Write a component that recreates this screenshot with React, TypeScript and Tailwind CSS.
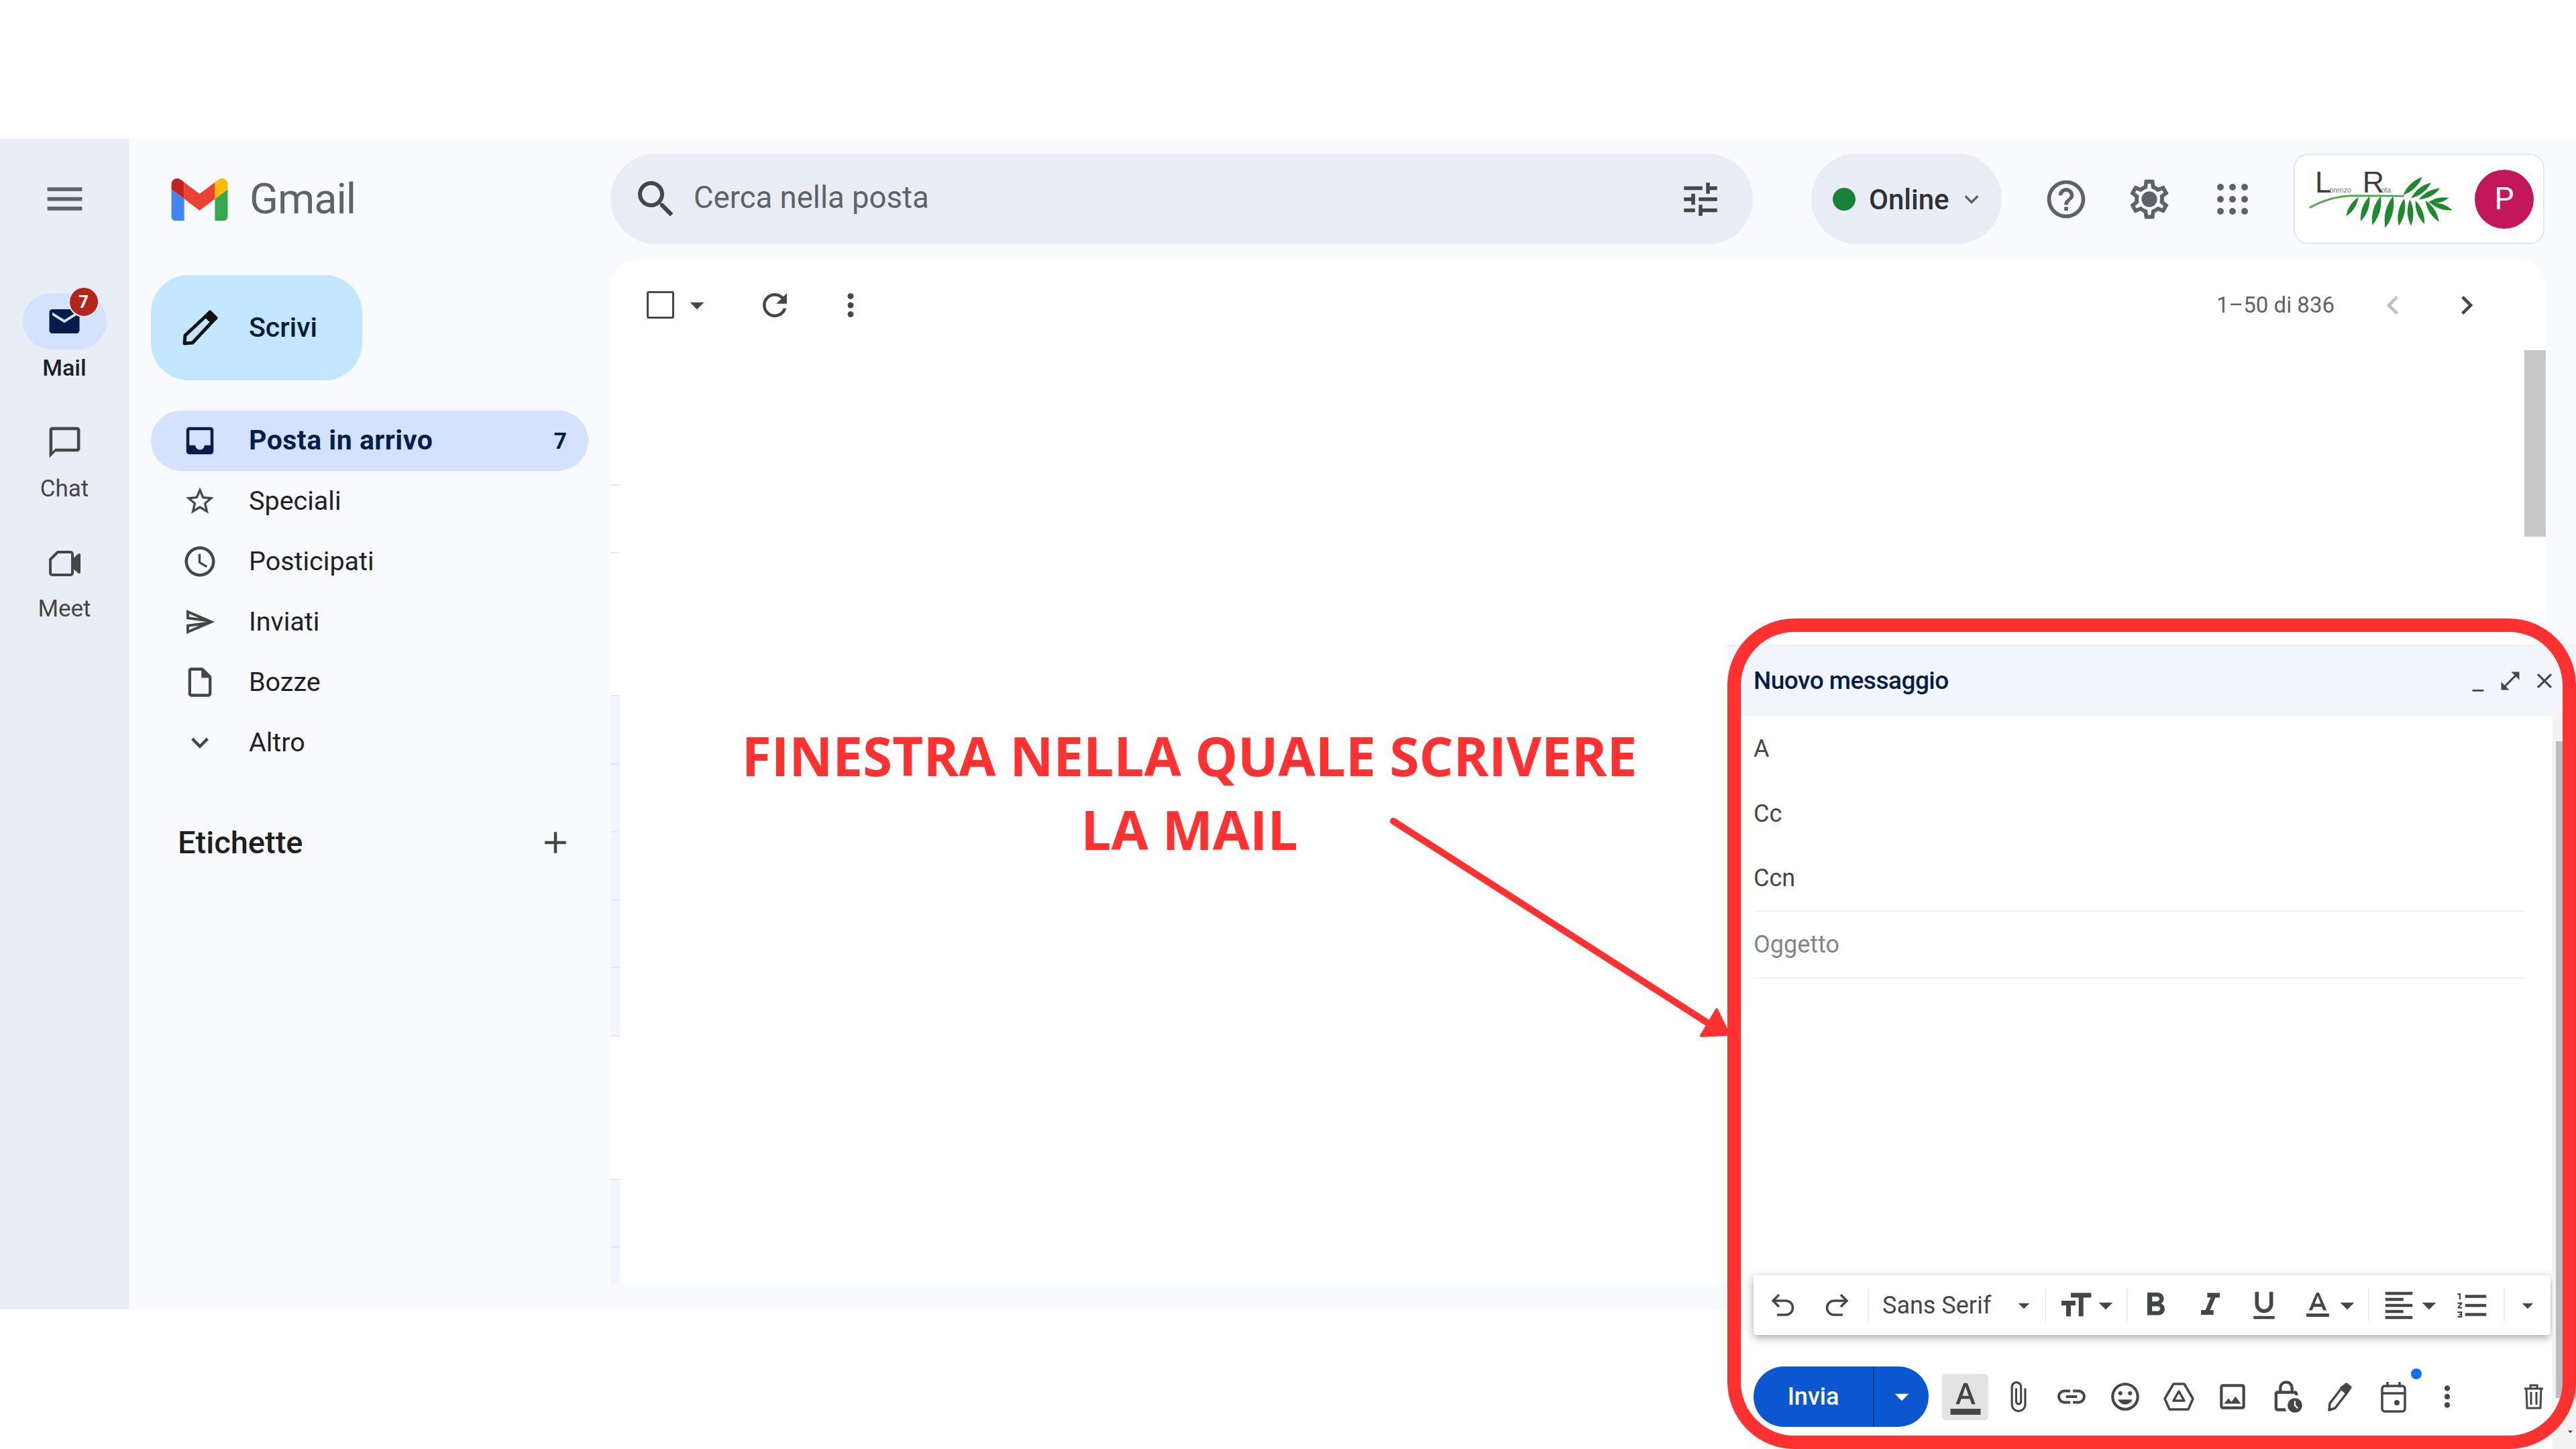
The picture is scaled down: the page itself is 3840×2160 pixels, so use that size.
import React from 'react';
import {
  MdMenu, MdEmail, MdOutlineChatBubbleOutline, MdInbox, MdStarBorder, MdAccessTime,
  MdOutlineSend, MdOutlineInsertDriveFile, MdExpandMore, MdAdd, MdSearch, MdTune, MdHelpOutline, MdOutlineSettings,
  MdRefresh, MdMoreVert, MdArrowDropDown, MdChevronLeft, MdChevronRight, MdMinimize, MdOpenInFull, MdClose,
  MdFormatSize, MdFormatBold, MdFormatItalic, MdFormatUnderlined, MdTextFormat, MdFormatAlignLeft, MdFormatListNumbered,
  MdFormatColorText, MdAttachFile, MdLink, MdInsertEmoticon, MdOutlineImage, MdOutlineLockClock,
} from 'react-icons/md';

const navItems = [
  { label: 'Speciali', icon: <MdStarBorder size={50} /> },
  { label: 'Posticipati', icon: <MdAccessTime size={54} /> },
  { label: 'Inviati', icon: <MdOutlineSend size={48} /> },
  { label: 'Bozze', icon: <MdOutlineInsertDriveFile size={52} /> },
  { label: 'Altro', icon: <MdExpandMore size={52} /> },
];

const stripRows = [
  { h: 'h-[335px]', cls: '' },
  { h: 'h-[101px]', cls: 'border-t-2 border-[#e8eaef]' },
  { h: 'h-[213px]', cls: 'border-t-2 border-[#e8eaef]' },
  { h: 'h-[102px]', cls: 'bg-[#f2f6fc] border-t-2 border-[#e5e8ee]' },
  { h: 'h-[101px]', cls: 'bg-[#f2f6fc] border-t-2 border-[#e5e8ee]' },
  { h: 'h-[102px]', cls: 'bg-[#f2f6fc] border-t-2 border-[#e5e8ee]' },
  { h: 'h-[100px]', cls: 'bg-[#f2f6fc] border-t-2 border-[#e5e8ee]' },
  { h: 'h-[102px]', cls: 'bg-[#f2f6fc] border-t-2 border-[#e5e8ee]' },
  { h: 'h-[214px]', cls: 'border-t-2 border-[#e5e8ee]' },
  { h: 'h-[101px]', cls: 'bg-[#f2f6fc] border-t-2 border-[#e5e8ee]' },
  { h: 'h-[57px]', cls: 'bg-[#f2f6fc] border-t-2 border-[#e5e8ee]' },
];

const leaves = [
  [290, 210, 235, 295], [340, 205, 300, 318], [390, 205, 352, 335], [445, 205, 410, 348], [495, 215, 470, 338],
  [520, 220, 525, 338], [545, 225, 585, 330], [590, 225, 650, 320], [610, 235, 710, 268], [600, 235, 695, 213],
  [560, 220, 655, 170], [525, 215, 615, 145], [490, 200, 575, 120],
];

function GmailLogo() {
  return (
    <svg width="85" height="63" viewBox="52 42 88 66">
      <path fill="#4285f4" d="M58 108h14V74L52 59v43c0 3.32 2.69 6 6 6" />
      <path fill="#34a853" d="M120 108h14c3.32 0 6-2.69 6-6V59l-20 15" />
      <path fill="#fbbc04" d="M120 48v26l20-15v-8c0-7.42-8.47-11.65-14.4-7.2" />
      <path fill="#ea4335" d="M72 74V48l24 18 24-18v26L96 92" />
      <path fill="#c5221f" d="M52 51v8l20 15V48l-5.6-4.2c-5.94-4.45-14.4-.22-14.4 7.2" />
    </svg>
  );
}

function PalmLogo() {
  return (
    <svg width="250" height="135" viewBox="30 15 750 405" className="shrink-0">
      <text x="96" y="190" fontFamily="Liberation Sans" fontSize="134" fill="#3c3c3c">L</text>
      <text x="160" y="188" fontFamily="Liberation Sans" fontSize="32" fill="#777">orenzo</text>
      <text x="308" y="190" fontFamily="Liberation Sans" fontSize="134" fill="#3c3c3c">R</text>
      <text x="392" y="188" fontFamily="Liberation Sans" fontSize="32" fill="#777">ota</text>
      <path d="M75 255 C130 225 190 205 260 203 L490 205" fill="none" stroke="#5aa755" strokeWidth="9" strokeLinecap="round" />
      {leaves.map(([x1, y1, x2, y2], i) => {
        const mx = (x1 + x2) / 2;
        const my = (y1 + y2) / 2;
        const nx = (y2 - y1) * 0.22;
        const ny = (x1 - x2) * 0.22;
        return (
          <path key={i} fill="#1f8a2c" d={`M${x1} ${y1} Q${mx + nx} ${my + ny} ${x2} ${y2} Q${mx - nx} ${my - ny} ${x1} ${y1}Z`} />
        );
      })}
    </svg>
  );
}

function AppsIcon() {
  return (
    <svg width="46" height="46" viewBox="0 0 46 46" fill="#5f6368">
      {[5, 23, 41].map((cy) =>
        [5, 23, 41].map((cx) => <circle key={`${cx}-${cy}`} cx={cx} cy={cy} r="5" />)
      )}
    </svg>
  );
}

function ComposePencil() {
  return (
    <svg width="54" height="54" viewBox="0 0 54 54" fill="none" stroke="#111" strokeWidth="5" strokeLinejoin="round">
      <path d="M4 50l1-12L36 9l9 9-29 31z" />
      <path d="M36 9l6-6 9 9-6 6z" fill="#111" />
    </svg>
  );
}

function MeetIcon() {
  return (
    <svg width="48" height="40" viewBox="0 0 48 40" fill="none" stroke="#444746" strokeWidth="4" strokeLinejoin="round">
      <path d="M14 3h19a3 3 0 0 1 3 3v28a3 3 0 0 1-3 3H6a3 3 0 0 1-3-3V14z" />
      <path d="M36 16l10-9v26l-10-9z" fill="#444746" />
    </svg>
  );
}

function HistoryIcon({ flip }: { flip?: boolean }) {
  return (
    <svg width="36" height="36" viewBox="0 0 36 36" fill="none" stroke="#444746" strokeWidth="3.5" className={flip ? '-scale-x-100' : ''}>
      <path d="M12 2L3 11l9 9" />
      <path d="M3 11h19a10 10 0 0 1 0 21H9" />
    </svg>
  );
}

function DriveIcon() {
  return (
    <svg width="46" height="42" viewBox="0 0 46 42" fill="none" stroke="#444746" strokeWidth="3.5" strokeLinejoin="round">
      <path d="M15 2h16l13 22-7 16H9L2 24z" />
      <path d="M23 13l8 14H15z" />
    </svg>
  );
}

function PenIcon() {
  return (
    <svg width="40" height="44" viewBox="0 0 40 44" fill="none" stroke="#444746" strokeWidth="3.5" strokeLinejoin="round">
      <path d="M4 42l1-10L22 10l8 7-17 22z" />
      <path d="M22 9l8-6 6 5-6 9z" fill="#444746" />
    </svg>
  );
}

function CalendarIcon() {
  return (
    <svg width="38" height="48" viewBox="0 0 38 48" fill="none" stroke="#444746" strokeWidth="3.5">
      <rect x="2" y="8" width="34" height="38" rx="4" />
      <path d="M2 19h34M10 2v8M28 2v8" />
      <circle cx="24" cy="33" r="4" fill="#444746" stroke="none" />
    </svg>
  );
}

function TrashIcon() {
  return (
    <svg width="30" height="38" viewBox="0 0 30 38" fill="none" stroke="#444746" strokeWidth="3">
      <path d="M1 7h28M10 7V2h10v5M4 7l1 29h20l1-29M11 12v19M19 12v19" />
    </svg>
  );
}

function ToolSep({ className }: { className: string }) {
  return <div className={`w-[2px] h-[49px] bg-[#eceef1] shrink-0 ${className}`} />;
}

function Tool({ className, children }: { className: string; children: React.ReactNode }) {
  return <div className={`flex items-center justify-center shrink-0 ${className}`}>{children}</div>;
}

function ComposeWindow() {
  return (
    <div className="absolute left-[2575px] top-[961px] w-[1265px] h-[1199px] bg-white flex flex-col border-t-2 border-[#ededed] font-['Roboto',sans-serif]">
      <div className="h-[104px] shrink-0 bg-[#f2f6fc] flex items-center pl-[39px] pr-[28px]">
        <span className="text-[37px] font-medium tracking-[-0.5px] text-[#041e49]">Nuovo messaggio</span>
        <div className="ml-auto flex items-center text-[#444746]">
          <MdMinimize size={34} className="mr-[13px] translate-y-[3px]" />
          <MdOpenInFull size={36} className="mr-[14px]" />
          <MdClose size={38} />
        </div>
      </div>
      <div className="flex flex-1 min-h-0">
        <div className="w-[1230px] pl-[39px] flex flex-col text-[36px] text-[#444746]">
          <div className="h-[98px] flex items-center">A</div>
          <div className="h-[96px] flex items-center">Cc</div>
          <div className="h-[98px] flex items-center w-[1151px] border-b-2 border-[#eef0f2]">Ccn</div>
          <div className="h-[100px] flex items-center w-[1151px] border-b-2 border-[#eef0f2] text-[#80868b]">Oggetto</div>
          <div className="flex-1" />
          <div className="h-[89px] w-[1188px] bg-white rounded-[4px] shadow-[0_4px_14px_rgba(0,0,0,0.35)] flex items-center pl-[4px] text-[#444746]">
            <Tool className="w-[80px]"><HistoryIcon /></Tool>
            <Tool className="w-[80px]"><HistoryIcon flip /></Tool>
            <ToolSep className="ml-[6px]" />
            <span className="ml-[20px] w-[191px] shrink-0 text-[36px]">Sans Serif</span>
            <Tool className="w-[40px]"><MdArrowDropDown size={50} /></Tool>
            <ToolSep className="ml-[11px]" />
            <Tool className="ml-[16px] w-[56px]"><MdFormatSize size={56} /></Tool>
            <Tool className="w-[34px]"><MdArrowDropDown size={50} className="shrink-0" /></Tool>
            <ToolSep className="ml-[14px]" />
            <Tool className="w-[82px]"><MdFormatBold size={58} /></Tool>
            <Tool className="w-[82px]"><MdFormatItalic size={56} /></Tool>
            <Tool className="w-[78px]"><MdFormatUnderlined size={54} /></Tool>
            <Tool className="ml-[9px] w-[64px]"><MdTextFormat size={58} /></Tool>
            <Tool className="w-[24px]"><MdArrowDropDown size={50} className="shrink-0" /></Tool>
            <ToolSep className="ml-[19px]" />
            <Tool className="ml-[12px] w-[64px]"><MdFormatAlignLeft size={54} /></Tool>
            <Tool className="w-[26px]"><MdArrowDropDown size={50} className="shrink-0" /></Tool>
            <Tool className="ml-[20px] w-[64px]"><MdFormatListNumbered size={54} /></Tool>
            <ToolSep className="ml-[14px]" />
            <Tool className="ml-[14px] w-[40px]"><MdArrowDropDown size={50} /></Tool>
          </div>
          <div className="mt-[47px] h-[90px] flex items-center mb-[33px] text-[#444746]">
            <div className="flex h-[90px] w-[261px] shrink-0 rounded-full overflow-hidden bg-[#0b57d0] text-white">
              <div className="w-[180px] flex items-center justify-center border-r-2 border-[#123a7c] text-[36px] font-medium">Invia</div>
              <div className="flex-1 flex items-center justify-center"><MdArrowDropDown size={50} /></div>
            </div>
            <div className="ml-[20px] w-[69px] h-[69px] shrink-0 rounded-[6px] bg-[#e3e3e3] flex items-center justify-center"><MdFormatColorText size={54} /></div>
            <Tool className="ml-[4px] w-[80px]"><MdAttachFile size={50} /></Tool>
            <Tool className="w-[80px]"><MdLink size={50} /></Tool>
            <Tool className="w-[80px]"><MdInsertEmoticon size={50} /></Tool>
            <Tool className="w-[80px]"><DriveIcon /></Tool>
            <Tool className="w-[80px]"><MdOutlineImage size={50} /></Tool>
            <Tool className="w-[80px]"><MdOutlineLockClock size={52} /></Tool>
            <Tool className="w-[80px]"><PenIcon /></Tool>
            <Tool className="w-[80px] relative">
              <CalendarIcon />
              <span className="absolute right-[-2px] top-[-18px] w-[16px] h-[16px] rounded-full bg-[#0b6ff0]" />
            </Tool>
            <Tool className="w-[80px]"><MdMoreVert size={50} /></Tool>
            <Tool className="ml-[49px] w-[80px]"><TrashIcon /></Tool>
          </div>
        </div>
        <div className="w-[35px] bg-[#f3f3f3] flex flex-col">
          <div className="h-[38px]" />
          <div className="ml-[5px] h-[979px] bg-[#bdbdbd]" />
          <div className="flex-1 flex items-end justify-center text-[#444746]"><MdArrowDropDown size={44} className="ml-[18px] mb-[4px]" /></div>
        </div>
      </div>
    </div>
  );
}

export default function App() {
  return (
    <div className="relative w-[3840px] h-[2160px] bg-white overflow-hidden font-['Roboto',sans-serif] pt-[207px]">
      <div className="flex h-[1745px] bg-[#f8fafd]">
        {/* rail */}
        <div className="w-[192px] shrink-0 bg-[#e9eef6] flex flex-col items-center pt-[55px] text-[#444746]">
          <MdMenu size={69} className="text-[#5f6368]" />
          <div className="relative mt-[106px] w-[125px] h-[84px] rounded-full bg-[#d3e3fd] flex items-center justify-center">
            <MdEmail size={54} className="text-[#041e49]" />
            <span className="absolute left-[68px] top-[-10px] w-[46px] h-[46px] rounded-full bg-[#b3261e] border-2 border-[#e9eef6] text-white text-[26px] font-bold flex items-center justify-center">7</span>
          </div>
          <span className="mt-[7px] h-[40px] leading-[40px] text-[34px] font-medium text-[#202124]">Mail</span>
          <MdOutlineChatBubbleOutline size={55} className="mt-[64px]" />
          <span className="mt-[22px] h-[40px] leading-[40px] text-[35px]">Chat</span>
          <div className="mt-[61px] h-[60px] flex items-center"><MeetIcon /></div>
          <span className="mt-[18px] h-[40px] leading-[40px] text-[35px]">Meet</span>
        </div>

        {/* sidebar */}
        <div className="w-[718px] shrink-0 pl-[33px]">
          <div className="h-[180px] flex items-center pl-[30px]">
            <GmailLogo />
            <span className="ml-[32px] text-[63px] tracking-[-1px] text-[#5f6368]">Gmail</span>
          </div>
          <div className="mt-[23px] w-[315px] h-[157px] rounded-[56px] bg-[#c2e7ff] flex items-center">
            <div className="w-[146px] flex justify-center"><ComposePencil /></div>
            <span className="text-[41px] font-medium text-[#001d35]">Scrivi</span>
          </div>
          <div className="mt-[45px] w-[652px] text-[39.5px] text-[#202124]">
            <div className="h-[90px] rounded-full bg-[#d3e3fd] flex items-center pr-[32px] font-bold text-[#041e49]">
              <div className="w-[146px] flex justify-center"><MdInbox size={54} /></div>
              <span className="text-[41px] tracking-[0.5px]">Posta in arrivo</span>
              <span className="ml-auto text-[34px]">7</span>
            </div>
            {navItems.map((item) => (
              <div key={item.label} className="h-[90px] flex items-center">
                <div className="w-[146px] flex justify-center text-[#444746]">{item.icon}</div>
                <span>{item.label}</span>
              </div>
            ))}
          </div>
          <div className="mt-[74px] w-[652px] pl-[40px] pr-[22px] h-[60px] flex items-center justify-between text-[#1f1f1f]">
            <span className="text-[47px] font-medium">Etichette</span>
            <MdAdd size={54} className="text-[#444746]" />
          </div>
        </div>

        {/* main */}
        <div className="w-[2885px] shrink-0">
          <div className="h-[180px] flex pt-[22px]">
            <div className="w-[1703px] h-[135px] rounded-full bg-[#e9eef6] flex items-center pl-[32px] pr-[45px] text-[#444746]">
              <MdSearch size={72} />
              <span className="ml-[20px] pb-[2px] text-[45.5px] text-[#5f6368]">Cerca nella posta</span>
              <MdTune size={66} className="ml-auto" />
            </div>
            <div className="ml-[87px] w-[284px] h-[135px] rounded-full bg-[#e9eef6] flex items-center pl-[32px] text-[#303134]">
              <span className="w-[34px] h-[34px] rounded-full bg-[#188038]" />
              <span className="ml-[20px] pt-[2px] text-[42px] font-medium">Online</span>
              <MdExpandMore size={42} className="ml-[12px] text-[#5f6368]" />
            </div>
            <div className="ml-[56px] w-[80px] h-[135px] flex items-center justify-center text-[#5f6368]"><MdHelpOutline size={68} /></div>
            <div className="relative ml-[44px] w-[80px] h-[135px] flex items-center justify-center text-[#5f6368]">
              <MdOutlineSettings size={70} />
              <span className="absolute left-[29px] top-[57px] w-[22px] h-[22px] rounded-full bg-[#5f6368]" />
            </div>
            <div className="ml-[44px] w-[80px] h-[135px] flex items-center justify-center"><AppsIcon /></div>
            <div className="ml-[51px] w-[374px] h-[135px] rounded-[22px] bg-white border-2 border-[#e3e5e9] flex items-center pl-[8px] pr-[14px]">
              <PalmLogo />
              <span className="ml-auto w-[88px] h-[88px] rounded-full bg-[#c2185b] text-white text-[46px] flex items-center justify-center">P</span>
            </div>
          </div>
          <div className="h-[1528px] rounded-t-[40px] bg-white flex overflow-hidden">
            <div className="w-[14px] shrink-0 flex flex-col">
              {stripRows.map((row, i) => (
                <div key={i} className={`${row.h} ${row.cls}`} />
              ))}
            </div>
            <div className="flex-1 h-[135px] flex items-center text-[#444746]">
              <div className="ml-[40px] w-[41px] h-[41px] border-[3px] border-[#444746] rounded-[3px]" />
              <MdArrowDropDown size={50} className="ml-[9px]" />
              <MdRefresh size={54} className="ml-[64px]" />
              <MdMoreVert size={54} className="ml-[59px]" />
              <span className="ml-auto text-[33px] text-[#5f6368]">1–50 di 836</span>
              <MdChevronLeft size={56} className="ml-[59px] text-[#bdc1c6]" />
              <MdChevronRight size={56} className="ml-[54px] mr-[58px]" />
            </div>
            <div className="w-[32px] shrink-0">
              <div className="mt-[135px] h-[278px] bg-[#c8c8c8]" />
            </div>
          </div>
        </div>
      </div>

      <ComposeWindow />

      {/* annotation over the page */}
      <div className="absolute left-[2575px] top-[922px] w-[1265px] h-[1238px] border-[20px] border-[#ff3131] rounded-[100px]" />
      <div className="absolute left-[1073px] top-[1071px] w-[1400px] text-center text-[80px] leading-[110px] font-bold text-[#ff3131] font-['Open_Sans',sans-serif]">
        FINESTRA NELLA QUALE SCRIVERE<br />LA MAIL
      </div>
      <svg className="absolute left-0 top-0" width="3840" height="2160" fill="none">
        <path d="M2077 1224 L2560 1534" stroke="#ff3131" strokeWidth="10" strokeLinecap="round" />
        <path d="M2559 1505 L2577 1542 L2536 1544 Z" fill="#ff3131" stroke="#ff3131" strokeWidth="4" strokeLinejoin="round" />
      </svg>
    </div>
  );
}
